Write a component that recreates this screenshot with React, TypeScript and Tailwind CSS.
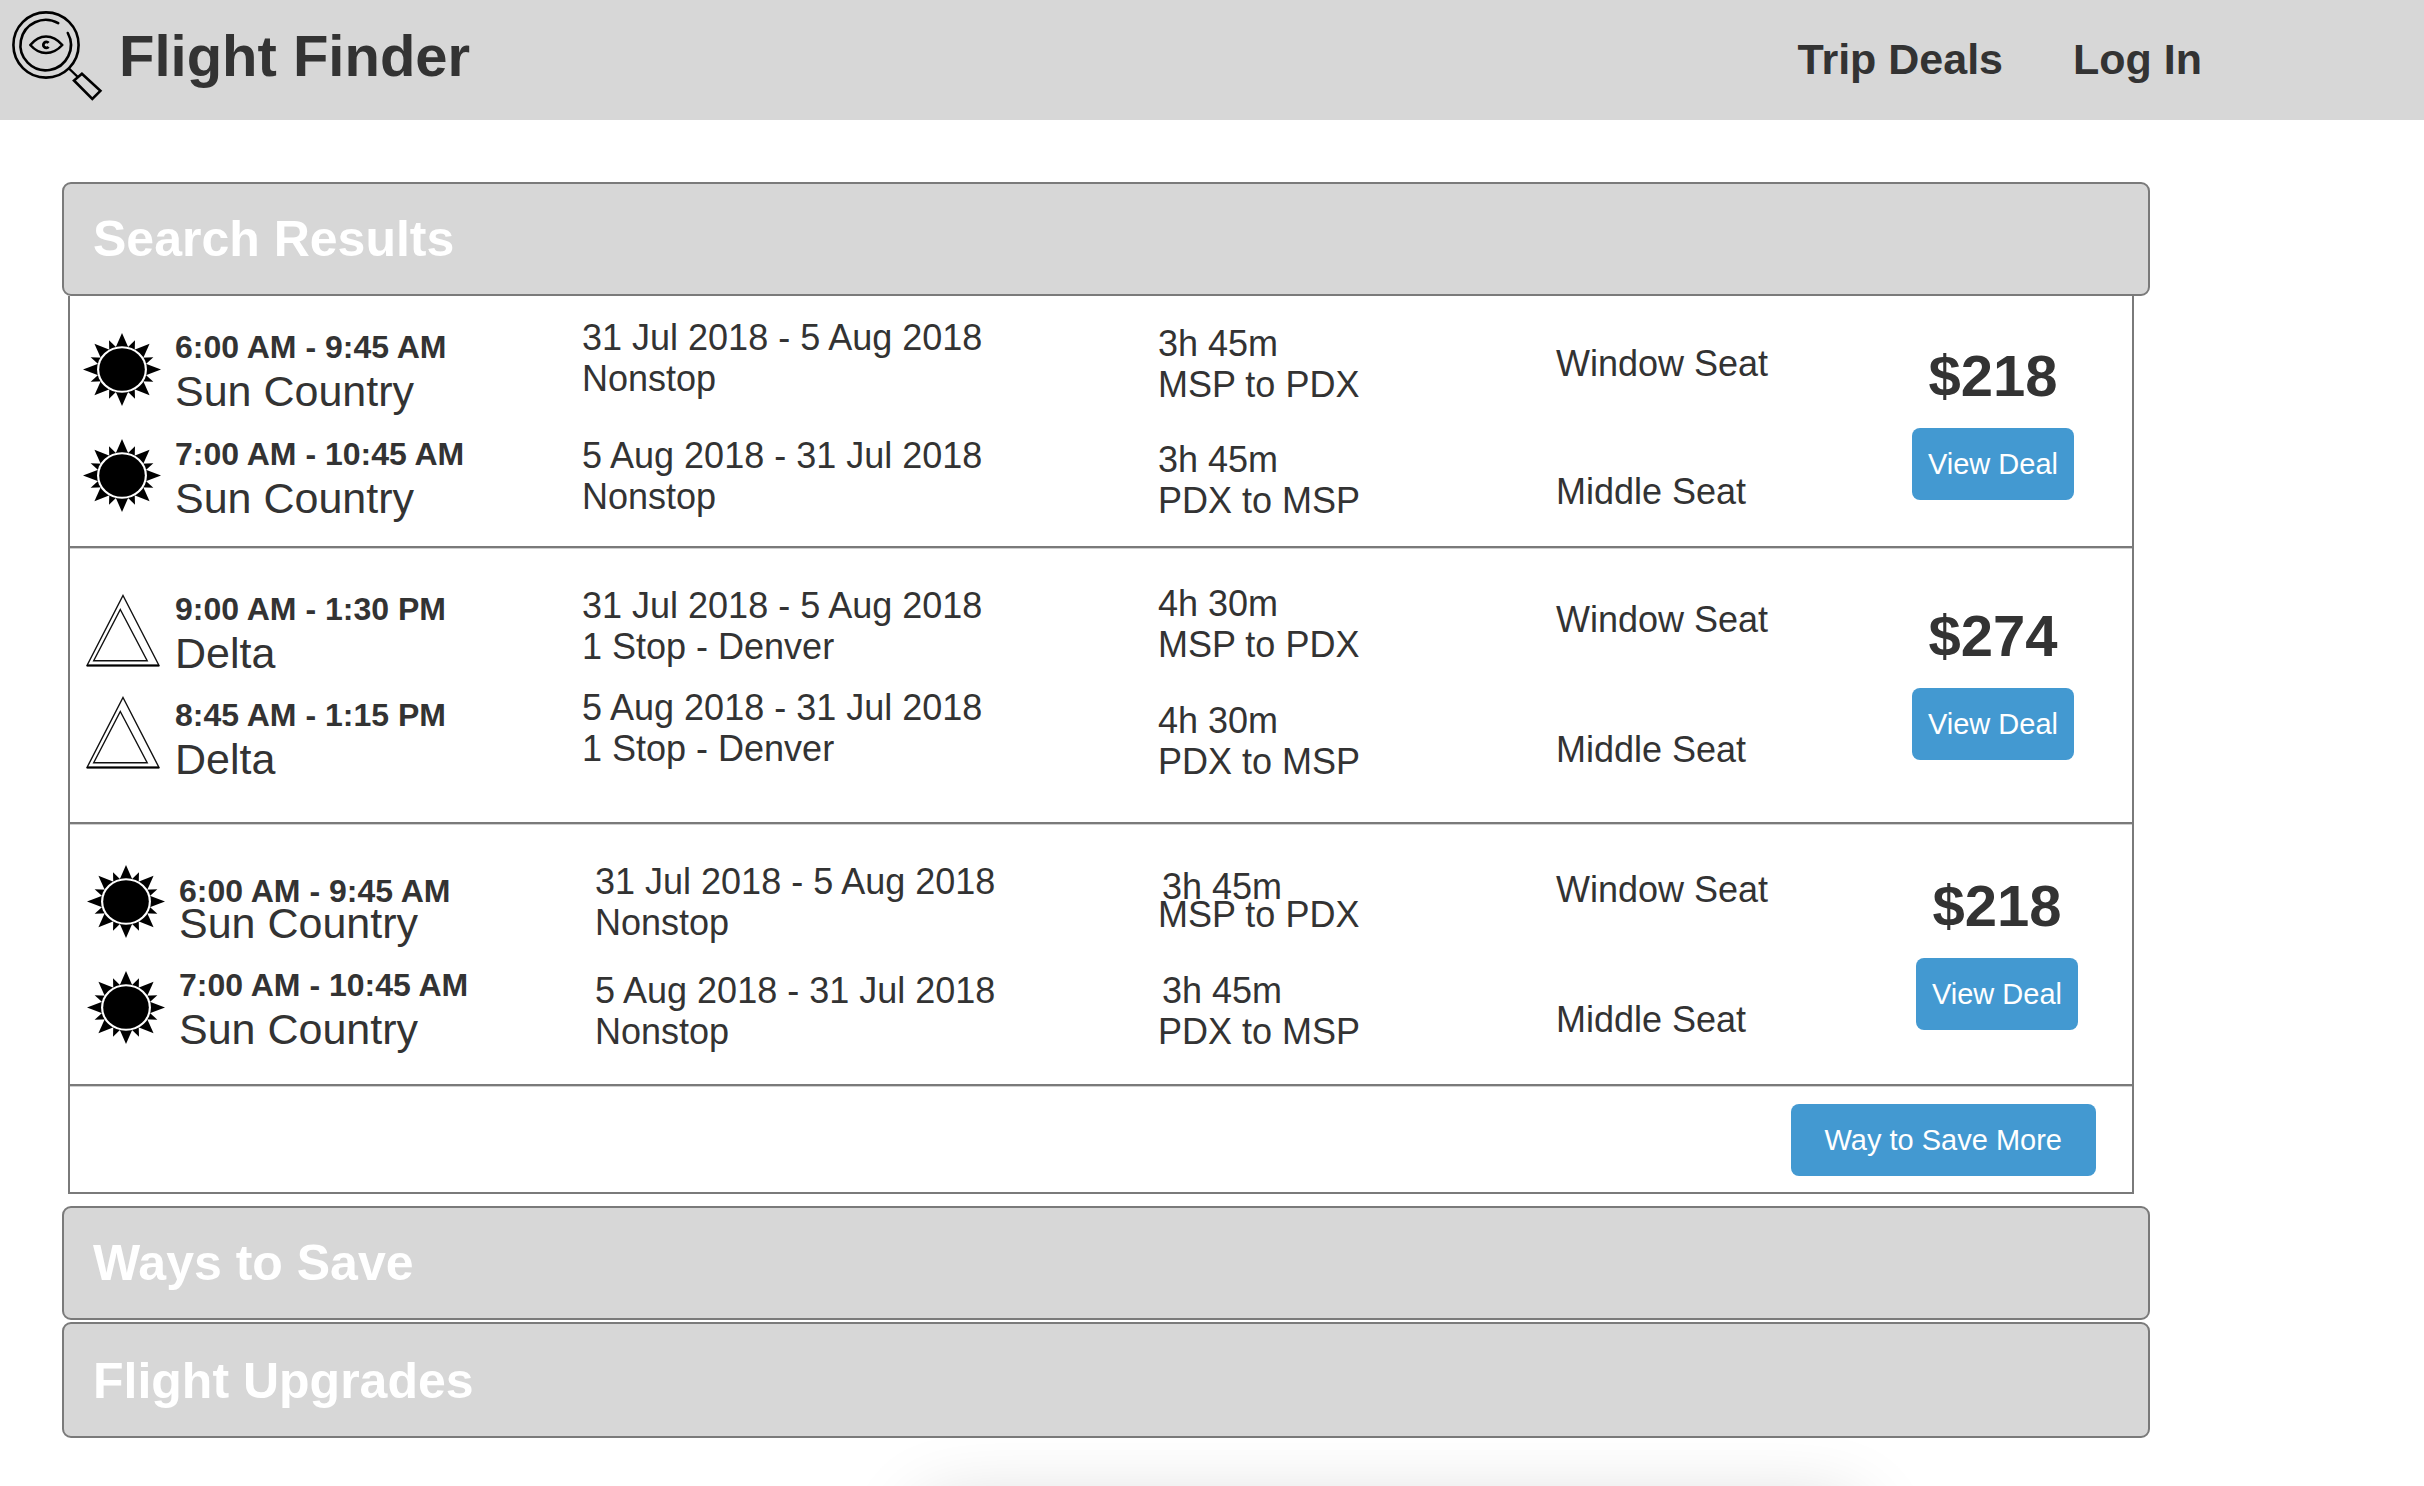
import React from "react";

type Pair = [string, string];

interface Flight {
  airline: string;
  icon: "sun" | "triangle";
  times: Pair;
  dates: Pair;
  stops: string;
  duration: string;
  price: string;
  tight?: boolean;
  columns: string;
  indent: string;
  iconStack: string;
  timeStack: string;
  dateStack: string;
  durationStack: string;
  seatStack: string;
  priceStack: string;
}

const routes: Pair = ["MSP to PDX", "PDX to MSP"];
const seats: Pair = ["Window Seat", "Middle Seat"];

const flights: Flight[] = [
  {
    airline: "Sun Country",
    icon: "sun",
    times: ["6:00 AM - 9:45 AM", "7:00 AM - 10:45 AM"],
    dates: ["31 Jul 2018 - 5 Aug 2018", "5 Aug 2018 - 31 Jul 2018"],
    stops: "Nonstop",
    duration: "3h 45m",
    price: "$218",
    columns: "grid-cols-[512fr_576fr_398fr_356fr_220fr] pb-6",
    indent: "pl-[13px]",
    iconStack: "pt-[37px] gap-[33px]",
    timeStack: "pt-[31px] gap-[19px]",
    dateStack: "pt-[21px] gap-[36px]",
    durationStack: "pt-[27px] gap-[34px]",
    seatStack: "pt-[47px] gap-[87px]",
    priceStack: "pt-[48px]",
  },
  {
    airline: "Delta",
    icon: "triangle",
    times: ["9:00 AM - 1:30 PM", "8:45 AM - 1:15 PM"],
    dates: ["31 Jul 2018 - 5 Aug 2018", "5 Aug 2018 - 31 Jul 2018"],
    stops: "1 Stop - Denver",
    duration: "4h 30m",
    price: "$274",
    columns: "grid-cols-[512fr_576fr_398fr_356fr_220fr] pb-[39px]",
    indent: "pl-[13px]",
    iconStack: "pt-[46px] gap-[29px]",
    timeStack: "pt-[41px] gap-[18px]",
    dateStack: "pt-[37px] gap-[20px]",
    durationStack: "pt-[35px] gap-[35px]",
    seatStack: "pt-[51px] gap-[89px]",
    priceStack: "pt-[56px]",
  },
  {
    airline: "Sun Country",
    icon: "sun",
    times: ["6:00 AM - 9:45 AM", "7:00 AM - 10:45 AM"],
    dates: ["31 Jul 2018 - 5 Aug 2018", "5 Aug 2018 - 31 Jul 2018"],
    stops: "Nonstop",
    duration: "3h 45m",
    price: "$218",
    tight: true,
    columns: "grid-cols-[525fr_563fr_398fr_360fr_216fr] pb-[31px]",
    indent: "pl-[17px]",
    iconStack: "pt-[41px] gap-[33px]",
    timeStack: "pt-[47px] gap-[30px]",
    dateStack: "pt-[37px] gap-[27px]",
    durationStack: "pt-[49px] gap-[41px]",
    seatStack: "pt-[45px] gap-[89px]",
    priceStack: "pt-[50px]",
  },
];

function Logo() {
  return (
    <svg
      viewBox="10 8 94 94"
      className="size-[94px] shrink-0"
      fill="none"
      stroke="#000"
      strokeWidth="2.6"
      strokeLinecap="round"
      aria-hidden="true"
    >
      <circle cx="46" cy="44" r="32.6" />
      <path d="M58.2 22.2A25.2 25.2 0 1 0 67.8 32" strokeWidth="2.6" />
      <path
        d="M30.3 44C35 38.4 40 35.5 46 35.5S57.5 38.4 62.3 44C57.5 49.3 52 52 46 52S35 49.3 30.3 44Z"
        strokeWidth="2.6"
        strokeLinejoin="round"
      />
      <path d="M48.6 41.9A3 3 0 1 0 48.6 45.9" strokeWidth="2.8" strokeLinecap="butt" />
      <path d="M69 67.5L77.3 75.5" strokeWidth="2.4" />
      <path d="M81.9 72.7L100.4 89.8L92.3 98L74 79.5Z" strokeWidth="2.6" />
    </svg>
  );
}

function SunIcon() {
  const angles = [0, 45, 90, 135, 180, 225, 270, 315];
  return (
    <svg viewBox="-100 -100 200 200" preserveAspectRatio="none" className="h-[73px] w-[78px]" aria-hidden="true">
      {angles.map((a) => (
        <g key={a} transform={`rotate(${a})`}>
          <path d="M-18 -56L0 -100L18 -56Z" />
          <path d="M-12 -56L0 -87L12 -56Z" transform="rotate(22.5)" />
        </g>
      ))}
      <circle r="64" fill="#fff" />
      <circle r="58.5" />
    </svg>
  );
}

function TriangleIcon() {
  return (
    <svg viewBox="0 0 78 73" className="h-[73px] w-[78px]" fill="none" stroke="#111" strokeWidth="1.4" aria-hidden="true">
      <path d="M40 1.5L76 71.5H4Z" />
      <path d="M4 71.5H76" strokeWidth="2" stroke="#000" />
      <path d="M37.3 15.5L64.2 66.7H10.7Z" />
    </svg>
  );
}

function SectionHeading({ title, className }: { title: string; className: string }) {
  return (
    <h2>
      <button
        type="button"
        className={`block w-full rounded-[9px] border-2 border-[#7a7a7a] bg-[#d7d7d7] pl-[29px] text-left text-[50px] leading-[64px] font-bold text-white ${className}`}
      >
        {title}
      </button>
    </h2>
  );
}

function FlightRow({ flight }: { flight: Flight }) {
  const Icon = flight.icon === "sun" ? SunIcon : TriangleIcon;
  return (
    <li
      className={`grid border-b-2 border-[#7a7a7a] text-4xl leading-[41px] whitespace-nowrap shadow-[0_1px_0_#cfcfcf] ${flight.columns}`}
    >
      <div className={`flex gap-[14px] ${flight.indent}`}>
        <div className={`flex flex-col ${flight.iconStack}`}>
          <Icon />
          <Icon />
        </div>
        <div className={`flex flex-col ${flight.timeStack}`}>
          {flight.times.map((time, i) => (
            <div key={time}>
              <p className="text-[32px] leading-10 font-bold">{time}</p>
              <p className={flight.tight && i === 0 ? "text-[43px] leading-6" : "text-[43px] leading-[48px]"}>
                {flight.airline}
              </p>
            </div>
          ))}
        </div>
      </div>
      <div className={`flex flex-col ${flight.dateStack}`}>
        {flight.dates.map((date) => (
          <div key={date}>
            <p>{date}</p>
            <p>{flight.stops}</p>
          </div>
        ))}
      </div>
      <div className={`flex flex-col ${flight.durationStack}`}>
        {routes.map((route, i) => (
          <div key={route} className={flight.tight && i === 0 ? "leading-7" : ""}>
            <p className={flight.tight ? "pl-1" : ""}>{flight.duration}</p>
            <p>{route}</p>
          </div>
        ))}
      </div>
      <div className={`flex flex-col ${flight.seatStack}`}>
        {seats.map((seat) => (
          <p key={seat}>{seat}</p>
        ))}
      </div>
      <div className={`flex w-[162px] flex-col items-center gap-5 ${flight.priceStack}`}>
        <p className="text-[58px] leading-[64px] font-bold">{flight.price}</p>
        <button type="button" className="h-[72px] w-full rounded-lg bg-[#4399d1] text-[29px] leading-9 text-white">
          View Deal
        </button>
      </div>
    </li>
  );
}

export default function App() {
  return (
    <div className="min-h-screen overflow-x-hidden bg-white font-['Liberation_Sans',Arial,sans-serif] text-[#333]">
      <header className="flex min-h-[120px] items-center bg-[#d7d7d7] pr-[222px] pl-[10px]">
        <a href="#home" className="flex items-center gap-[15px] pb-2">
          <Logo />
          <h1 className="text-[58px] leading-[64px] font-bold">Flight Finder</h1>
        </a>
        <nav className="ml-auto flex gap-[70px] pb-0.5 text-[43px] leading-[48px] font-bold">
          <a href="#deals">Trip Deals</a>
          <a href="#login">Log In</a>
        </nav>
      </header>

      <main className="mt-[62px] mr-[274px] ml-[62px]">
        <SectionHeading title="Search Results" className="py-[23px]" />
        <div className="mr-4 ml-[6px] border-x-2 border-b-2 border-[#7a7a7a]">
          <ul>
            {flights.map((flight, i) => (
              <FlightRow key={i} flight={flight} />
            ))}
          </ul>
          <div className="flex justify-end pt-[18px] pr-9 pb-4">
            <button
              type="button"
              className="h-[72px] rounded-lg bg-[#4399d1] px-[34px] text-[29px] leading-9 text-white"
            >
              Way to Save More
            </button>
          </div>
        </div>
        <div className="mt-3 flex flex-col gap-0.5">
          <SectionHeading title="Ways to Save" className="py-[23px]" />
          <SectionHeading title="Flight Upgrades" className="pt-[25px] pb-[23px]" />
        </div>
      </main>

      <div className="pointer-events-none fixed right-[569px] -bottom-[124px] left-[925px] h-[100px] shadow-[0_0_80px_rgba(0,0,0,0.2)]" />
    </div>
  );
}
